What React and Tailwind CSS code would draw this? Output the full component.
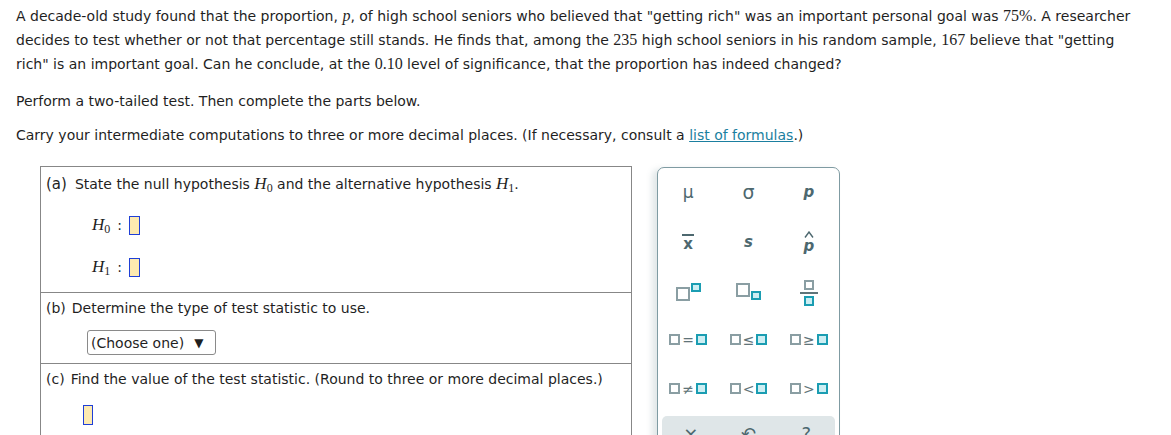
import React from 'react';

const font = { fontFamily: '"DejaVu Sans", Verdana, sans-serif' };
const serif = 'font-["Liberation_Serif",serif]';

const Blank = () => (
  <span className="block w-[11px] h-[19px] bg-[#fdeab0] border border-[#1f3fd6]" />
);

// grey outlined box and teal filled box used by the palette templates
const Sq = ({ on, size = 'w-[11px] h-[11px]' }) =>
  on ? (
    <span className={`block ${size} bg-[#cdeef3] border-2 border-[#1b9db2]`} />
  ) : (
    <span className={`block ${size} bg-white border-2 border-[#8a9ea3]`} />
  );

const Rel = ({ sym }) => (
  <span className="flex items-center gap-[2px]">
    <Sq />
    <span className="text-[14px] leading-none text-[#5f7479]">{sym}</span>
    <Sq on />
  </span>
);

const Cell = ({ children }) => (
  <div className="flex items-center justify-center h-[49px] leading-none text-[#4d686f]">{children}</div>
);

const Palette = () => (
  <div className="w-[183px] h-[280px] mt-px border border-[#7f9ba2] rounded-[7px] bg-white shadow-[-5px_2px_6px_rgba(90,120,130,0.18)] overflow-hidden flex flex-col">
    <div className="grid grid-cols-3">
      <Cell><span className="text-[17px]">μ</span></Cell>
      <Cell><span className="text-[19px]">σ</span></Cell>
      <Cell><span className="text-[15px] font-bold italic">p</span></Cell>
      <Cell>
        <span className="flex flex-col items-center gap-[1px] mt-[2px]">
          <span className="w-[12px] h-[2px] bg-[#4d686f]" />
          <span className="text-[15px] font-bold">x</span>
        </span>
      </Cell>
      <Cell><span className="text-[15px] font-bold italic mt-[2px]">s</span></Cell>
      <Cell>
        <span className="flex flex-col items-center mt-[2px]">
          <svg width="10" height="7" viewBox="0 0 10 7" className="mb-[1px]">
            <path d="M1 6.5 L5 1 L9 6.5" fill="none" stroke="#4d686f" strokeWidth="1.4" />
          </svg>
          <span className="text-[15px] font-bold italic">p</span>
        </span>
      </Cell>
      <Cell>
        <span className="flex items-start mt-[2px]">
          <span className="mt-[4px]"><Sq size="w-[14px] h-[14px]" /></span>
          <span className="ml-[1px]"><Sq on size="w-[10px] h-[9px]" /></span>
        </span>
      </Cell>
      <Cell>
        <span className="flex items-start mt-[2px]">
          <Sq size="w-[14px] h-[14px]" />
          <span className="mt-[8px] ml-[1px]"><Sq on size="w-[10px] h-[9px]" /></span>
        </span>
      </Cell>
      <Cell>
        <span className="flex flex-col items-center gap-[2px] mt-[4px]">
          <Sq size="w-[10px] h-[10px]" />
          <span className="w-[18px] h-[2px] bg-[#5f7479]" />
          <Sq on size="w-[10px] h-[10px]" />
        </span>
      </Cell>
      <Cell><Rel sym="=" /></Cell>
      <Cell><Rel sym="≤" /></Cell>
      <Cell><Rel sym="≥" /></Cell>
      <Cell><Rel sym="≠" /></Cell>
      <Cell><Rel sym="<" /></Cell>
      <Cell><Rel sym=">" /></Cell>
    </div>
    <div className="mx-[4px] mt-[3px] flex-1 bg-[#dfe6e8] rounded-t-[5px] grid grid-cols-3 text-[#4d686f] text-[18px] leading-none pt-[9px]">
      <span className="text-center">×</span>
      <span className="text-center">↶</span>
      <span className="text-center">?</span>
    </div>
  </div>
);

const Num = ({ children }) => <span className={serif + ' text-[16px]'}>{children}</span>;

const H = ({ n }) => (
  <i className={serif + ' text-[17px]'}>
    H<sub className="text-[12px] not-italic">{n}</sub>
  </i>
);

export default function App() {
  return (
    <div className="w-[1171px] h-[435px] overflow-hidden bg-white text-[#1f1f1f] text-[14px] leading-[24px] px-4 pt-1" style={font}>
      <div className="whitespace-nowrap">
        <p>
          A decade-old study found that the proportion, <i className={serif + ' text-[16px]'}>p</i>, of high school seniors who believed that "getting rich" was an important personal goal was <Num>75%</Num>. A researcher
        </p>
        <p>
          decides to test whether or not that percentage still stands. He finds that, among the <Num>235</Num> high school seniors in his random sample, <Num>167</Num> believe that "getting
        </p>
        <p>
          rich" is an important goal. Can he conclude, at the <Num>0.10</Num> level of significance, that the proportion has indeed changed?
        </p>
      </div>
      <p className="mt-[13px]">Perform a two-tailed test. Then complete the parts below.</p>
      <p className="mt-[10px]">
        Carry your intermediate computations to three or more decimal places. (If necessary, consult a{' '}
        <span className="text-[#1b7fa0] underline">list of formulas</span>.)
      </p>

      <div className="flex mt-[19px] ml-6 gap-[25px]">
        <div className="w-[592px] border border-[#878787] h-[280px] shrink-0">
          <div className="h-[126px] border-b border-[#878787] px-[5px] pt-[5px]">
            <div className="flex gap-[8px]">
              <span className="text-[15px]">(a)</span>
              <span>
                State the null hypothesis <H n="0" /> and the alternative hypothesis <H n="1" />.
              </span>
            </div>
            <div className="ml-[46px] mt-[18px] flex items-center gap-[7px] h-[22px]">
              <H n="0" />
              <span>:</span>
              <Blank />
            </div>
            <div className="ml-[46px] mt-[20px] flex items-center gap-[7px] h-[22px]">
              <H n="1" />
              <span>:</span>
              <Blank />
            </div>
          </div>
          <div className="h-[71px] border-b border-[#878787] px-[5px] pt-[3px]">
            <div className="flex gap-[6px]">
              <span>(b)</span>
              <span>Determine the type of test statistic to use.</span>
            </div>
            <div className="ml-[41px] mt-[10px] w-[129px] h-[25px] border border-[#8a8a8a] rounded-[3px] flex items-center px-[3px] leading-none">
              <span>(Choose one)</span>
              <span className="ml-[10px] text-[12px]">▼</span>
            </div>
          </div>
          <div className="px-[5px] pt-[3px]">
            <div className="flex gap-[6px]">
              <span>(c)</span>
              <span>Find the value of the test statistic. (Round to three or more decimal places.)</span>
            </div>
            <div className="ml-[37px] mt-[14px] h-[20px] flex">
              <span className="block w-[10px] h-[20px] bg-[#fdeab0] border border-[#1f3fd6]" />
            </div>
          </div>
        </div>
        <Palette />
      </div>
    </div>
  );
}
